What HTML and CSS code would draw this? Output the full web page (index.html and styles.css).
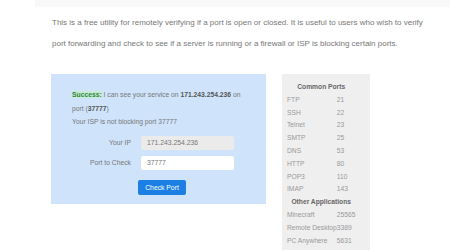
FILE: index.html
```html
<!DOCTYPE html>
<html>
    <head>
        <meta charset="utf-8">
        <title>Open Port Check Tool</title>
        <link rel="stylesheet" href="styles.css">
    </head>
    <body>
        <div class="topbar"></div>

        <main>
            <p class="intro">This is a free utility for remotely verifying if a port is open or closed. It is useful to users who wish to verify port forwarding and check to see if a server is running or a firewall or ISP is blocking certain ports.</p>

            <div class="tools">
                <div class="checker">
                    <p class="msg"><span class="ok">Success:</span> I can see your service on <b>171.243.254.236</b> on<br>port (<b>37777</b>)<br>Your ISP is not blocking port 37777</p>
                    <form class="form">
                        <div class="row">
                            <label>Your IP</label>
                            <input type="text" value="171.243.254.236" disabled>
                        </div>
                        <div class="row">
                            <label>Port to Check</label>
                            <input type="text" value="37777">
                        </div>
                        <div class="actions">
                            <button type="button">Check Port</button>
                        </div>
                    </form>
                </div>

                <div class="ports">
                    <table>
                        <tr><th colspan="2">Common Ports</th></tr>
                        <tr><td>FTP</td><td>21</td></tr>
                        <tr><td>SSH</td><td>22</td></tr>
                        <tr><td>Telnet</td><td>23</td></tr>
                        <tr><td>SMTP</td><td>25</td></tr>
                        <tr><td>DNS</td><td>53</td></tr>
                        <tr><td>HTTP</td><td>80</td></tr>
                        <tr><td>POP3</td><td>110</td></tr>
                        <tr><td>IMAP</td><td>143</td></tr>
                        <tr><th colspan="2">Other Applications</th></tr>
                        <tr><td>Minecraft</td><td>25565</td></tr>
                        <tr><td>Remote Desktop</td><td>3389</td></tr>
                        <tr><td>PC Anywhere</td><td>5631</td></tr>
                    </table>
                </div>
            </div>
        </main>
    </body>
</html>
```

FILE: styles.css
```css
body {
    margin: 0;
    font-family: 'Liberation Sans', Arial, sans-serif;
    font-size: 8px;
    background-color: #fff;
    color: #777;
}

.topbar {
    height: 7px;
    margin-left: 35px;
    background-color: #f9f9f9;
}

main {
    padding-left: 51px;
}

.intro {
    width: 376px;
    margin: 5px 0 0 1px;
    line-height: 21px;
}

.tools {
    display: flex;
    align-items: flex-start;
    gap: 16px;
    margin-top: 20px;
}

.checker {
    width: 215px;
    height: 130px;
    box-sizing: border-box;
    padding: 14px 20px 0 21px;
    background-color: #cfe4fb;
    font-size: 6.75px;
}

.msg {
    margin: 0;
    line-height: 13.5px;
}

.msg b {
    color: #555;
}

.ok {
    color: #2e8540;
    font-weight: bold;
    background-color: #c8ecd3;
}

.form {
    margin-top: 7px;
}

.row {
    display: flex;
    align-items: center;
    margin-bottom: 6px;
}

.row label {
    width: 59px;
    text-align: right;
    margin-right: 10px;
}

.row input {
    width: 93px;
    height: 14px;
    box-sizing: border-box;
    padding: 0 5px;
    border: 1px solid #fff;
    border-radius: 2px;
    font-family: inherit;
    font-size: 6.8px;
    color: #777;
    background-color: #fff;
}

.row input:disabled {
    background-color: #ebebeb;
    border-color: #ebebeb;
}

.actions {
    display: flex;
    justify-content: center;
    padding-left: 6px;
    margin-top: 10px;
}

button {
    width: 48px;
    height: 15px;
    padding: 0;
    border: none;
    border-radius: 2px;
    background-color: #1b7fe3;
    color: #fff;
    font-family: inherit;
    font-size: 6.8px;
}

.ports {
    width: 88px;
    height: 176px;
    box-sizing: border-box;
    padding: 6px 5px 0;
    background-color: #efefef;
    font-size: 6.7px;
}

.ports table {
    border-collapse: collapse;
    color: #999;
}

.ports th {
    color: #666;
    font-weight: bold;
    text-align: center;
    height: 13px;
    padding: 0;
}

.ports td {
    height: 12.8px;
    padding: 0;
    white-space: nowrap;
}
```
